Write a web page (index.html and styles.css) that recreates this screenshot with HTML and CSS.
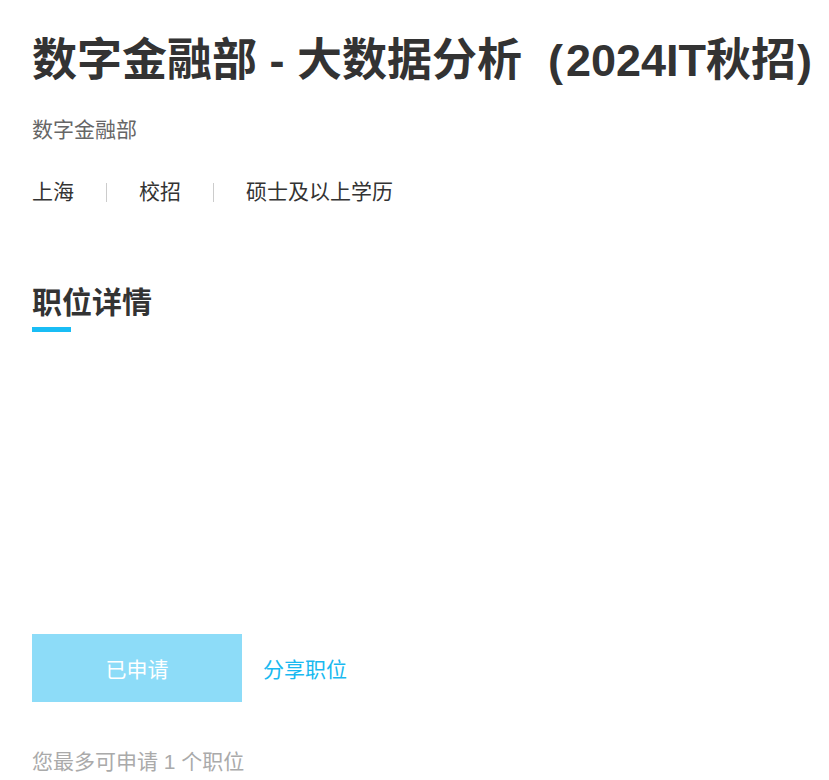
FILE: index.html
```html
<!DOCTYPE html>
<html lang="zh-CN">
<head>
<meta charset="utf-8">
<title>数字金融部 - 大数据分析（2024IT秋招）</title>
<link rel="stylesheet" href="styles.css">
</head>
<body>
<main class="page">
  <h1 class="title">数字金融部 - 大数据分析<span class="paren-open">(</span>2024IT秋招<span class="paren-close">)</span></h1>
  <div class="dept">数字金融部</div>
  <ul class="meta">
    <li>上海</li>
    <li class="sep"></li>
    <li>校招</li>
    <li class="sep"></li>
    <li>硕士及以上学历</li>
  </ul>
  <section class="detail">
    <h2 class="detail-title">职位详情</h2>
    <div class="detail-bar"></div>
    <div class="detail-body"></div>
  </section>
  <div class="actions">
    <button class="apply-btn" type="button" disabled>已申请</button>
    <a class="share" href="#">分享职位</a>
  </div>
  <p class="note">您最多可申请 1 个职位</p>
</main>
</body>
</html>
```
FILE: styles.css
```css
html, body {
  margin: 0;
  padding: 0;
  background: #fff;
}
body {
  font-family: "Liberation Sans", "Noto Sans CJK SC", sans-serif;
  color: #333;
  overflow: hidden;
}
.page {
  padding: 0 32px;
}
.title {
  margin: 0;
  padding-top: 31px;
  font-size: 45px;
  line-height: 60px;
  font-weight: bold;
  color: #333;
  white-space: nowrap;
}
.paren-open {
  margin-left: 26px;
  margin-right: 3px;
}
.paren-close {
  margin-left: 1px;
}
.dept {
  margin-top: 25px;
  font-size: 21px;
  line-height: 28px;
  color: #666;
}
.meta {
  list-style: none;
  margin: 34px 0 0;
  padding: 0;
  display: flex;
  align-items: center;
  font-size: 21px;
  line-height: 28px;
  color: #333;
}
.meta .sep {
  width: 1px;
  height: 19px;
  background: #ccc;
  margin: 0 32px;
}
.detail {
  margin-top: 77px;
}
.detail-title {
  margin: 0;
  font-size: 30px;
  line-height: 40px;
  font-weight: bold;
  color: #333;
}
.detail-bar {
  margin-top: 4px;
  width: 39px;
  height: 5px;
  background: #19bdf5;
}
.detail-body {
  height: 302px;
}
.actions {
  display: flex;
  align-items: center;
}
.apply-btn {
  width: 210px;
  height: 68px;
  border: 0;
  padding: 0;
  background: #8ddcf8;
  color: #fff;
  font-family: inherit;
  font-size: 21px;
}
.share {
  margin-left: 21px;
  font-size: 21px;
  color: #19b9f0;
  text-decoration: none;
}
.note {
  margin: 46px 0 0;
  font-size: 21px;
  line-height: 28px;
  color: #aaa;
}
```
